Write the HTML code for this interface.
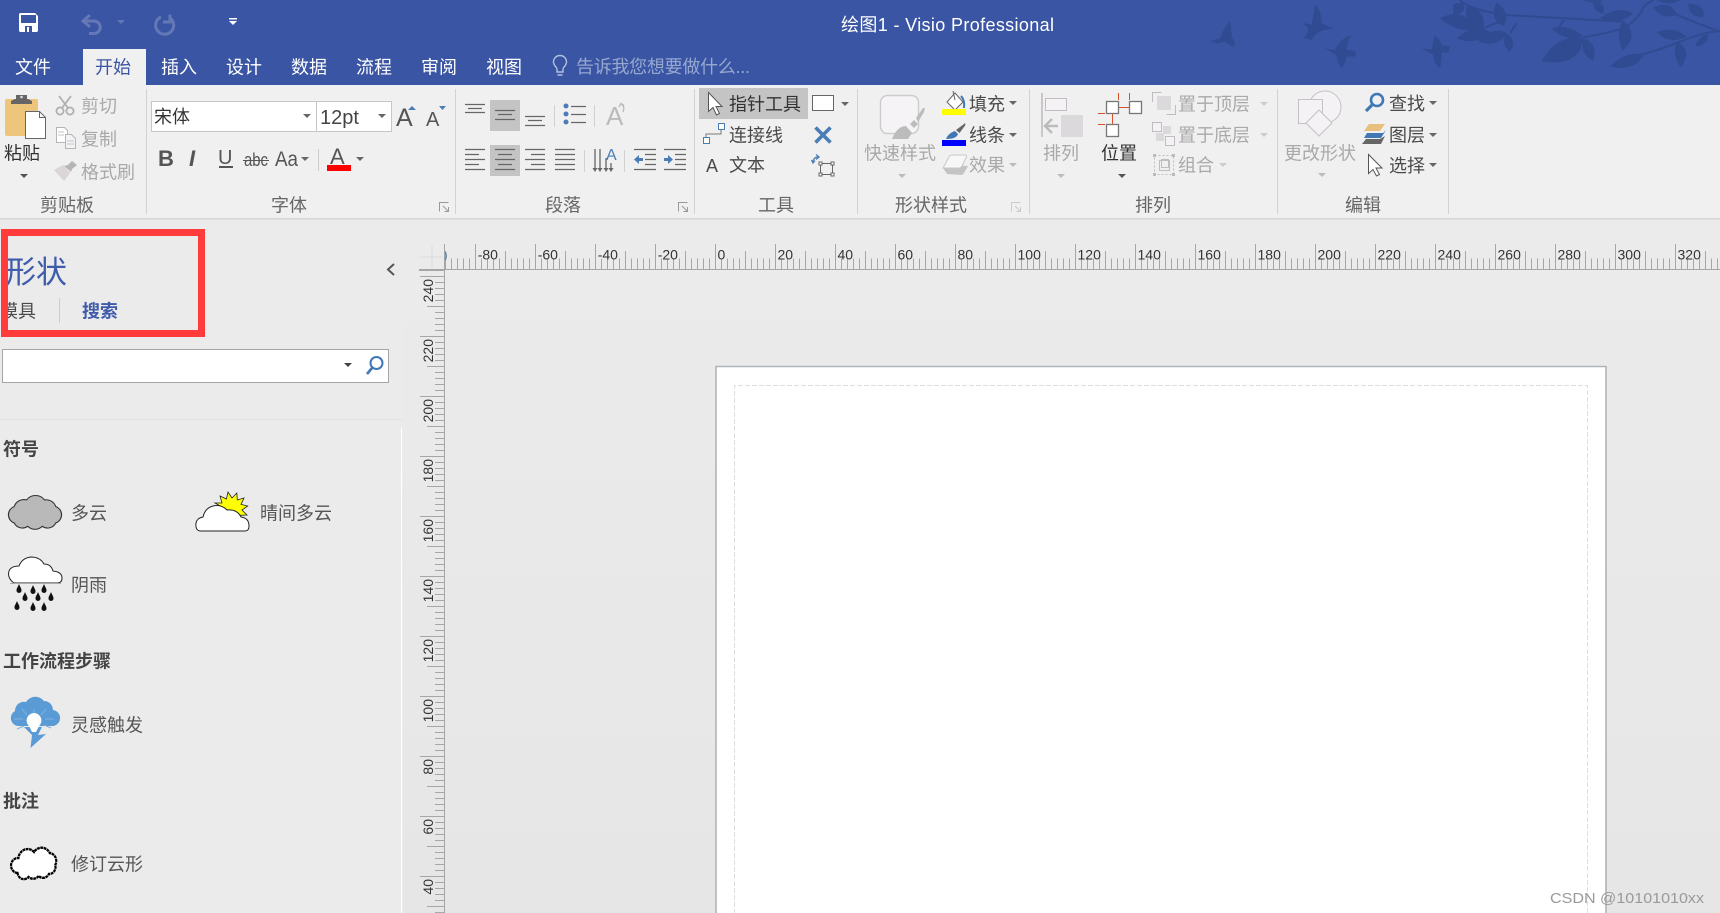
<!DOCTYPE html>
<html lang="zh-CN">
<head>
<meta charset="utf-8">
<title>绘图1 - Visio Professional</title>
<style>
html,body{margin:0;padding:0;width:1720px;height:913px;overflow:hidden;background:#ebebeb}
svg{display:block;position:absolute;left:0;top:0}
text{font-family:"Liberation Sans","Noto Sans CJK SC",sans-serif;font-size:18px;white-space:pre}
.t{fill:#fff}
.d{fill:#4a4a4a}
.g{fill:#a9a9a9}
.l{fill:#666}
.p{fill:#555}
.b{font-weight:700;fill:#444}
.r{font-size:14px;fill:#333}
</style>
</head>
<body>
<svg width="1720" height="913" viewBox="0 0 1720 913" xmlns="http://www.w3.org/2000/svg">
<defs>
<path id="a" d="M-4-2h8l-4 4z"/>
<path id="dr" d="M0-5C1-2 2.5-1 2.5 1.5a2.5 2.5 0 0 1-5 0C-2.5-1-1-2 0-5z" fill="#111"/>
<linearGradient id="bgg" x1="0" y1="0" x2="0" y2="1"><stop offset=".3" stop-color="#ebebeb"/><stop offset="1" stop-color="#e6e6e6"/></linearGradient>
</defs>

<!-- backgrounds -->
<rect width="1720" height="913" fill="url(#bgg)"/>
<rect x="0" y="219" width="403" height="694" fill="#ebebeb"/>
<rect width="1720" height="85" fill="#3a55a3"/>
<rect y="85" width="1720" height="133" fill="#f0f0f0"/>
<rect y="218" width="1720" height="1.5" fill="#d6d6d6"/>

<!-- title bar decorations -->
<g transform="translate(1240 0) scale(.3333)" fill="#304b91">
<path d="M-90 123L-60 115Q-50 85-30 63Q-25 90-25 110L-15 130L-20 141L-45 125L-70 130z"/>
<path d="M187 68L215 75L225 15Q245 30 245 70L280 85L245 92Q225 100 215 120L192 115Q205 95 205 85z"/>
<path d="M255 145L285 150Q300 115 335 105Q320 130 318 148L348 155L345 170L320 170Q315 195 305 205Q290 185 290 165z"/>
<path d="M545 145L575 148L583 108Q600 115 605 135L630 140L625 158L605 158Q605 185 600 205Q580 190 580 165z"/>
<path d="M600 55Q660 20 725 85Q660 105 600 55zM680 18Q740 30 730 85Q670 75 680 18zM770 8Q815 40 790 78Q745 55 770 8zM640 12Q680 0 672 30Q650 50 640 50zM650 115Q700 70 750 95Q710 140 650 115zM715 125Q760 75 800 100Q775 145 715 125zM800 100Q835 125 808 155Q780 130 800 100zM905 185Q950 100 1030 115Q1020 200 905 185zM1030 115Q1075 130 1060 182Q1020 165 1030 115zM935 85Q985 70 1030 110Q975 125 935 85zM1080 55Q1130 15 1180 40Q1140 75 1080 55zM1150 62Q1200 105 1148 152Q1125 100 1150 62zM1110 200Q1160 150 1210 165Q1185 215 1110 200zM1310 125Q1360 150 1322 202Q1295 165 1310 125zM1250 97Q1300 75 1340 110Q1290 135 1250 97zM1060 8Q1100 5 1090 42Q1060 35 1060 8zM1240 22Q1295 0 1310 45Q1265 60 1240 22zM1345 10Q1400 15 1390 52Q1345 50 1345 10zM1365 138Q1385 100 1405 105Q1400 140 1365 138zM1030 0Q1060 15 1090 5L1080 0zM1250 0Q1290 20 1320 0z"/>
<path d="M660 0Q690 30 800 45L1150 65M800 60Q760 70 725 88M1030 112Q1100 100 1150 85Q1195 60 1215 15L1240 0M1200 165Q1260 150 1320 125Q1380 100 1440 92M1300 40Q1370 70 1440 95M970 60L955 90M830 70L810 100" fill="none" stroke="#304b91" stroke-width="6"/>
</g>

<!-- QAT -->
<path d="M20 13h15l3 3v15l-1 1H20l-1-1V14z" fill="#fff"/>
<rect x="21" y="15" width="15" height="8" fill="#3a55a3"/>
<rect x="25" y="26" width="7" height="6" fill="#3a55a3"/>
<rect x="27" y="27" width="2" height="5" fill="#fff"/>
<g fill="none" stroke="#6478b5" stroke-width="3">
<path d="M90 15l-7 6 7 6M84 21h10a6.2 6.2 0 0 1 0 12.500h-5"/>
<path d="M161 17a9 9 0 1 0 9 1M170 14.500v7.500h-7"/>
</g>
<use href="#a" x="121" y="22" fill="#6478b5"/>
<rect x="229" y="18" width="8" height="1.500" fill="#fff"/>
<path d="M229 21h8l-4 4z" fill="#fff"/>
<text class="t" x="841" y="31" textLength="213" lengthAdjust="spacing">绘图1 - Visio Professional</text>

<!-- tabs -->
<rect x="83" y="49" width="63" height="36" fill="#f0f0f0"/>
<g class="t">
<text class="t" x="15" y="73.500">文件</text>
<text x="95" y="73.500" fill="#3a55a3">开始</text>
<text class="t" x="161" y="73.500">插入</text>
<text class="t" x="226" y="73.500">设计</text>
<text class="t" x="291" y="73.500">数据</text>
<text class="t" x="356" y="73.500">流程</text>
<text class="t" x="421" y="73.500">审阅</text>
<text class="t" x="486" y="73.500">视图</text>
</g>
<path d="M557 72v-3c0-2-3.500-3-3.500-7a6.500 6.500 0 0 1 13 0c0 4-3.500 5-3.500 7v3zM557.500 75h5" fill="none" stroke="#b4c0de" stroke-width="1.400"/>
<text x="576" y="73" fill="#97a8d0" textLength="174" lengthAdjust="spacing">告诉我您想要做什么...</text>

<!-- ribbon separators -->
<g fill="#d2d2d2">
<rect x="146" y="89" width="1" height="125"/><rect x="455" y="89" width="1" height="125"/><rect x="694" y="89" width="1" height="125"/><rect x="857" y="89" width="1" height="125"/><rect x="1029" y="89" width="1" height="125"/><rect x="1277" y="89" width="1" height="125"/><rect x="1448" y="89" width="1" height="125"/>
</g>

<!-- group labels -->
<g>
<text class="l" x="40" y="211.500">剪贴板</text>
<text class="l" x="271" y="211.500">字体</text>
<text class="l" x="545" y="211.500">段落</text>
<text class="l" x="758" y="211.500">工具</text>
<text class="l" x="895" y="211.500">形状样式</text>
<text class="l" x="1135" y="211.500">排列</text>
<text class="l" x="1345" y="211.500">编辑</text>
</g>
<g fill="none" stroke="#999" stroke-width="1">
<path d="M439.500 211.500v-9h9M443 206l5 5M448.500 207v4.500h-4"/>
<path d="M678.500 211.500v-9h9M682 206l5 5M687.500 207v4.500h-4"/>
</g>
<path d="M1011.500 211.500v-9h9M1015 206l5 5M1020.500 207v4.500h-4" fill="none" stroke="#ccc"/>

<!-- clipboard -->
<rect x="5" y="99" width="33" height="37" rx="2" fill="#edc67c"/>
<path d="M11 104v-3l4-2h1v-4h11v4h1l4 2v3z" fill="#666"/>
<circle cx="21.500" cy="97" r="1.300" fill="#ddd"/>
<path d="M25.500 111.500h14l6 6v21h-20z" fill="#fff" stroke="#666"/>
<path d="M39.500 111.500v6h6" fill="none" stroke="#666"/>
<text x="4" y="159.500" fill="#333">粘贴</text>
<use href="#a" x="24" y="176" fill="#555"/>
<g fill="none" stroke="#b0b0b0" stroke-width="1.800">
<circle cx="60" cy="111" r="3.600"/><circle cx="70" cy="111" r="3.600"/>
<path d="M62 108L71 96M68 108L59 96"/>
</g>
<g fill="#fff" stroke="#b5b5b5">
<path d="M56.500 127.500h8l3 3v12h-11z"/>
<path d="M65.500 134.500h6l4 4v10h-10z" fill="#f5f2f6"/>
<path d="M58 132h6M58 135h6M67 141h7M67 144h7" stroke="#c4c4c4"/>
</g>
<path d="M54 170l9-5 7 8-6 8z" fill="#d9d5d8"/><path d="M64 166l4-1 4-4 5 4-5 4-1 3z" fill="#b5b5b5"/>
<text class="g" x="81" y="112.500">剪切</text>
<text class="g" x="81" y="145.500">复制</text>
<text class="g" x="81" y="178.500">格式刷</text>

<!-- font -->
<rect x="151.500" y="101.500" width="165" height="30" fill="#fff" stroke="#c6c6c6"/>
<rect x="316.500" y="101.500" width="75" height="30" fill="#fff" stroke="#c6c6c6"/>
<text x="154" y="123" fill="#333">宋体</text>
<text x="320" y="124" style="font-size:20px" fill="#444">12pt</text>
<use href="#a" x="307" y="116" fill="#666"/>
<use href="#a" x="382" y="116" fill="#666"/>
<text x="396" y="126" style="font-size:25px" class="p">A</text>
<path d="M408 110l4-4 4 4z" fill="#4a7db5"/>
<text x="426" y="126" style="font-size:20px" class="p">A</text>
<path d="M439 106h7l-3.500 4z" fill="#4a7db5"/>
<text x="158" y="166" class="p" style="font-size:22px;font-weight:700">B</text>
<text x="189" y="166" class="p" style="font-size:22px;font-style:italic;font-weight:700">I</text>
<text x="218" y="164" class="p" style="font-size:20px">U</text>
<rect x="219" y="166" width="14" height="2" fill="#555"/>
<text x="244" y="166" class="p" textLength="24" lengthAdjust="spacingAndGlyphs">abc</text>
<rect x="243" y="160" width="26" height="1" fill="#555"/>
<text x="275" y="166" class="p" style="font-size:21px" textLength="23" lengthAdjust="spacingAndGlyphs">Aa</text>
<use href="#a" x="305" y="159" fill="#666"/>
<rect x="318" y="149" width="1" height="22" fill="#ccc"/>
<text x="330" y="164" class="p" style="font-size:22px">A</text>
<rect x="327" y="165" width="24" height="6" fill="#f00"/>
<use href="#a" x="360" y="159" fill="#666"/>

<!-- paragraph -->
<rect x="490" y="100" width="30" height="31" fill="#c4c4c4"/>
<rect x="490" y="145" width="30" height="31" fill="#c4c4c4"/>
<g fill="none" stroke="#666" stroke-width="1.300">
<path d="M465 104.500h20M468 108.500h14M465 112.500h20"/>
<path d="M495 110.500h20M498 114.500h14M495 119.500h20"/>
<path d="M525 116.500h20M528 120.500h14M525 125.500h20"/>
<path d="M465 149.500h20M465 154.500h14M465 159.500h20M465 164.500h14M465 169.500h20"/>
<path d="M495 149.500h20M498 154.500h14M495 159.500h20M498 164.500h14M495 169.500h20"/>
<path d="M525 149.500h20M531 154.500h14M525 159.500h20M531 164.500h14M525 169.500h20"/>
<path d="M555 149.500h20M555 154.500h20M555 159.500h20M555 164.500h20M555 169.500h20"/>
<path d="M571 106.500h15M571 114.500h15M571 122.500h15"/>
<path d="M595 149v21M600 149v21M606 158v12M611 163v7"/>
<path d="M634 149.500h22M645 154.500h11M645 159.500h11M645 164.500h11M634 169.500h22"/>
<path d="M664 149.500h22M675 154.500h11M675 159.500h11M675 164.500h11M664 169.500h22"/>
</g>
<g fill="#666"><path d="M592.500 168h5l-2.500 4zM597.500 168h5l-2.500 4zM603.500 168h5l-2.500 4zM608.500 168h5l-2.500 4z"/></g>
<g fill="#4a7db5">
<circle cx="566" cy="106" r="2.500"/><circle cx="566" cy="114" r="2.500"/><circle cx="566" cy="122" r="2.500"/>
<path d="M634 159.500l5-4.500v3h4v3h-4v3zM673 159.500l-5-4.500v3h-4v3h4v3z"/>
</g>
<text x="606" y="160" style="font-size:16px" fill="#4a7db5">A</text>
<g fill="#d0d0d0"><rect x="554" y="105" width="1" height="22"/><rect x="594" y="105" width="1" height="22"/><rect x="584" y="150" width="1" height="22"/><rect x="624" y="150" width="1" height="22"/></g>
<text x="606" y="125" style="font-size:26px" fill="#bbb">A</text>
<path d="M621 104c3 1 3.500 5 2 8M619 107l2-3.500 3 2" fill="none" stroke="#bbb" stroke-width="1.400"/>

<!-- tools -->
<rect x="699" y="88" width="109" height="31" fill="#c4c4c4"/>
<path d="M708.500 92.500v19l4.500-4 3.500 7.500 3-1.500-3.500-7h6z" fill="#fff" stroke="#555"/>
<text x="729" y="110.500" fill="#333">指针工具</text>
<rect x="812.500" y="95.500" width="21" height="15" fill="#fff" stroke="#666"/>
<use href="#a" x="845" y="104" fill="#666"/>
<path d="M721 129v5h-15v3" fill="none" stroke="#777"/>
<rect x="718.500" y="123.500" width="6" height="6" fill="#fff" stroke="#4a7db5"/>
<rect x="703.500" y="137.500" width="6" height="6" fill="#fff" stroke="#4a7db5"/>
<text class="d" x="729" y="141.500">连接线</text>
<path d="M815.500 127.500l15 15M830.500 127.500l-15 15" fill="none" stroke="#4a7db5" stroke-width="3.600"/>
<text class="d" x="706" y="172" style="font-size:18px">A</text>
<text class="d" x="729" y="171.500">文本</text>
<rect x="820.500" y="163.500" width="12" height="11" fill="none" stroke="#666"/>
<g fill="#fff" stroke="#666"><rect x="819" y="162" width="3" height="3"/><rect x="831" y="162" width="3" height="3"/><rect x="819" y="173" width="3" height="3"/><rect x="831" y="173" width="3" height="3"/></g>
<path d="M813 162a5 5 0 0 1 5-5M816 154.500l3 2.500-3 2.500M811.500 160l1.500 3 2-2.500" fill="none" stroke="#4a7db5" stroke-width="1.300"/>

<!-- shape styles -->
<rect x="880.500" y="95.500" width="38" height="38" rx="7" fill="#f5f3f6" stroke="#ccc" stroke-width="1.400"/>
<path d="M892 139c3-8 8-13 14-13l6 7-4 6z" fill="#bcbcbc"/>
<path d="M910 124l4-4 4 4-4 4zM916 118l7-10 2 0-1 4-6 10z" fill="#bcbcbc"/>
<text class="g" x="864" y="159.500">快速样式</text>
<use href="#a" x="902" y="176" fill="#bbb"/>
<path d="M955 93l8 9-8 8-8-8z" fill="#fff" stroke="#666"/>
<path d="M953 91l2 9" fill="none" stroke="#666"/>
<path d="M961 96q4 4 3 12" fill="none" stroke="#3f78b4" stroke-width="2"/>
<rect x="942" y="109" width="24" height="6" fill="#ff0"/>
<text class="d" x="969" y="110.500">填充</text>
<use href="#a" x="1013" y="103" fill="#666"/>
<path d="M946 139c2-5 6-7 9-8l3 3c-1 3-4 5-12 5z" fill="#3f78b4"/>
<path d="M956 130l8-6 1-1 .5 2-6 8z" fill="#666"/>
<rect x="942" y="140" width="24" height="6" fill="#00f"/>
<text class="d" x="969" y="141.500">线条</text>
<use href="#a" x="1013" y="135" fill="#666"/>
<path d="M943 168l4 6 14 1q2 0 3-2l4-7-20-1z" fill="#c4c4c4"/>
<path d="M943 168l6-11q1-2 3-2h13q2 0 1.500 2l-4.500 9q-1 2-3 2z" fill="#f7f7f7" stroke="#c8c8c8"/>
<text class="g" x="969" y="171.500">效果</text>
<use href="#a" x="1013" y="165" fill="#bbb"/>

<!-- arrange -->
<rect x="1041" y="93" width="2" height="44" fill="#c8c8c8"/>
<rect x="1045.500" y="98.500" width="21" height="12" fill="#f5f2f6" stroke="#c0bcc0"/>
<rect x="1061" y="115" width="22" height="22" fill="#dcd9dc"/>
<path d="M1052 119l-7 7 7 7M1046 126h12" fill="none" stroke="#bbb" stroke-width="2.500"/>
<text class="g" x="1043" y="159.500">排列</text>
<use href="#a" x="1061" y="176" fill="#bbb"/>
<path d="M1118.500 93v7M1129.500 93v7M1119 107.500h10M1112.500 114v10M1098 113.500h7M1098 124.500h7" fill="none" stroke="#d9512c"/>
<g fill="#fff" stroke="#777" stroke-width="1.300">
<rect x="1106.500" y="101.500" width="12" height="12"/><rect x="1129.500" y="101.500" width="12" height="12"/><rect x="1106.500" y="124.500" width="12" height="12"/>
</g>
<text x="1101" y="159.500" fill="#333">位置</text>
<use href="#a" x="1122" y="176" fill="#555"/>
<g fill="#f5f2f6" stroke="#c0bcc0">
<path d="M1152.500 102v-9.500h9" fill="none"/>
<rect x="1157" y="96" width="14" height="14" fill="#dcd9dc" stroke="none"/>
<path d="M1175.500 105v9.500h-9" fill="none"/>
<rect x="1152.500" y="122.500" width="9" height="9"/>
<rect x="1163" y="126" width="8" height="8" fill="#dcd9dc" stroke="none"/>
<rect x="1156" y="133" width="8" height="8" fill="#dcd9dc" stroke="none"/>
<rect x="1165.500" y="136.500" width="9" height="9"/>
<rect x="1159.500" y="160.500" width="10" height="10" fill="none"/>
<rect x="1154.500" y="155.500" width="19" height="19" fill="none" stroke-dasharray="2 2"/>
<rect x="1161.500" y="159.500" width="7" height="8" fill="none"/>
</g>
<g fill="#bbb"><rect x="1153" y="154" width="3" height="3"/><rect x="1172" y="154" width="3" height="3"/><rect x="1153" y="173" width="3" height="3"/><rect x="1172" y="173" width="3" height="3"/></g>
<text class="g" x="1178" y="110.500">置于顶层</text>
<text class="g" x="1178" y="141.500">置于底层</text>
<text class="g" x="1178" y="171.500">组合</text>
<use href="#a" x="1264" y="104" fill="#ccc"/>
<use href="#a" x="1264" y="135" fill="#ccc"/>
<use href="#a" x="1223" y="165" fill="#ccc"/>

<!-- edit -->
<circle cx="1325" cy="107" r="16" fill="#f5f2f6" stroke="#c4c0c4"/>
<rect x="1298.500" y="99.500" width="24" height="24" fill="#f5f2f6" stroke="#c4c0c4"/>
<path d="M1319 110l13 13-13 13-13-13z" fill="#f5f2f6" stroke="#c4c0c4"/>
<text class="g" x="1284" y="159.500">更改形状</text>
<use href="#a" x="1322" y="175" fill="#bbb"/>
<circle cx="1377" cy="100" r="6" fill="none" stroke="#3f78b4" stroke-width="2.600"/>
<path d="M1372 105l-6 6" stroke="#3f78b4" stroke-width="3.200"/>
<text class="d" x="1389" y="110">查找</text>
<use href="#a" x="1433" y="103" fill="#666"/>
<path d="M1369 124h16l-5 7h-16z" fill="#e8bf7c"/>
<path d="M1367 133h16l3-3-5 8h-17z" fill="#3f78b4"/>
<path d="M1366 139h14l5-3-4 8h-19z" fill="#666"/>
<text class="d" x="1389" y="141.500">图层</text>
<use href="#a" x="1433" y="135" fill="#666"/>
<path d="M1368.500 154.500v19l4.500-4 3.500 6.500 3-1.500-3.500-6.500h6z" fill="#fff" stroke="#555"/>
<text class="d" x="1389" y="172">选择</text>
<use href="#a" x="1433" y="165" fill="#666"/>

<!-- panel -->
<text x="5" y="283" style="font-size:31px" fill="#3f5bab">形状</text>
<text class="d" x="0" y="317.500">模具</text>
<rect x="59" y="298" width="1" height="25" fill="#ccc"/>
<text x="82" y="317.500" style="font-weight:700" fill="#3f5bab">搜索</text>
<rect x="0" y="229" width="1" height="108" fill="#ebebeb"/>
<rect x="4.500" y="232.500" width="197" height="101" fill="none" stroke="#ff3b3b" stroke-width="7"/>
<path d="M394 264l-6 5.500 6 5.500" fill="none" stroke="#555" stroke-width="2"/>
<rect x="2.500" y="349.500" width="386" height="33" fill="#fff" stroke="#a6a6a6"/>
<use href="#a" x="348" y="365" fill="#444"/>
<circle cx="376.500" cy="363" r="6" fill="none" stroke="#3f78b4" stroke-width="2"/>
<path d="M372 368l-5 6" stroke="#3f78b4" stroke-width="2.600"/>
<rect x="0" y="419" width="403" height="1" fill="#e0e0e0"/>
<rect x="401" y="428" width="1" height="485" fill="#fff"/>

<text class="b" x="3" y="455.500">符号</text>
<text class="b" x="3" y="667.500">工作流程步骤</text>
<text class="b" x="3" y="807.500">批注</text>
<text class="p" x="71" y="519.500">多云</text>
<text class="p" x="260" y="519.500">晴间多云</text>
<text class="p" x="71" y="591.500">阴雨</text>
<text class="p" x="71" y="731.500">灵感触发</text>
<text class="p" x="71" y="870.500">修订云形</text>

<!-- stencil icons -->
<path transform="translate(35 512) scale(1.120 1.100) translate(-35.500 -512)" d="M17 522a8 8 0 0 1 0-15a9 9 0 0 1 11-6a10 10 0 0 1 16 0a9 9 0 0 1 10 6a8 8 0 0 1 0 15a8 8 0 0 1-12 3a9 9 0 0 1-13 0a8 8 0 0 1-12-3z" fill="#b9b9b9" stroke="#333"/>
<circle cx="231" cy="510" r="10" fill="#ff0"/>
<path d="M215 503l7 0-2-7 6.400 3 1.600-7 4 6 4.800-5 .5 7 6.700-2-3 6.400 6.700 1.600-5.700 4 5 5-7 .3 2 6.700-11-10z" fill="#ff0" stroke="#222" stroke-width=".8"/>
<path d="M201 531H245q4 0 4-5q0-8-8-9q-4-8-14-7q-6-6-14-4q-8 2-10 11q-6 1-7 6q-1 8 5 8z" fill="#fff" stroke="#222"/>
<path d="M14 583H57q5 0 5-5q0-6-9-7q-2-7-9-7q-4-7-13-7q-9 1-12 9q-8 0-10 5q-2 7 5 12z" fill="#fff" stroke="#222"/>
<rect x="10" y="583" width="51" height="1" fill="#aaa"/>
<use href="#dr" x="19" y="589"/><use href="#dr" x="25" y="597"/><use href="#dr" x="33" y="590"/><use href="#dr" x="38" y="597"/><use href="#dr" x="44" y="589"/><use href="#dr" x="51" y="597"/><use href="#dr" x="17" y="606"/><use href="#dr" x="33" y="607"/><use href="#dr" x="44" y="607"/>
<g transform="translate(0 1)">
<path d="M18 725a8 8 0 0 1-3-15a9 9 0 0 1 11-9a11 11 0 0 1 18-1a9 9 0 0 1 9 9a8 8 0 0 1-2 16zM24 726l8 8-1.500 13L46 733l-8 1 4-8z" fill="#5b9bd5"/>
<path d="M34 708v5M22 708l5 6M46 708l-5 6M14 718h9M54 718h-9M17 728l7-3M51 727l-7-3" stroke="#7db0de" fill="none"/>
<path d="M34 712a7.500 7.500 0 0 1 5 13l-3 6h-4l-3-6a7.500 7.500 0 0 1 5-13z" fill="#fff"/>
</g>
<path transform="translate(35 0) scale(.92 1) translate(-35 0)" d="M16 873a7 7 0 0 1 1-15a10 10 0 0 1 17-6a10 10 0 0 1 17 1a8 8 0 0 1 6 12a7 7 0 0 1-7 9a7 7 0 0 1-11 2a8 8 0 0 1-11 1a7 7 0 0 1-12-4z" fill="#fff" stroke="#000" stroke-width="2.400" stroke-dasharray="3 .6"/>

<!-- rulers -->
<path d="M432 245v23M420 257h23" stroke="#dcdcdc" fill="none"/>
<rect x="419" y="269" width="1301" height="1" fill="#a6a6a6"/>
<rect x="419" y="269.500" width="26" height="1.500" fill="#a6a6a6"/>
<rect x="444" y="244" width="1" height="669" fill="#a6a6a6"/>
<g stroke="#a6a6a6" fill="none">
<line x1="445" y1="264" x2="1720" y2="264" stroke-width="11" stroke-dasharray="1 5"/>
<line x1="445" y1="260" x2="1720" y2="260" stroke-width="18" stroke-dasharray="1 29"/>
<line x1="475" y1="256.500" x2="1720" y2="256.500" stroke-width="25" stroke-dasharray="1 59"/>
<line x1="439.500" y1="270" x2="439.500" y2="913" stroke-width="9" stroke-dasharray="1 5"/>
<line x1="435.500" y1="276" x2="435.500" y2="913" stroke-width="17" stroke-dasharray="1 29"/>
<line x1="432" y1="276" x2="432" y2="913" stroke-width="24" stroke-dasharray="1 59"/>
</g>
<path d="M445.500 252q1.500 4 0 8" fill="none" stroke="#4a6fa0"/>
<g class="r">
<text class="r" x="477.700" y="259.500">-80</text>
<text class="r" x="537.700" y="259.500">-60</text>
<text class="r" x="597.700" y="259.500">-40</text>
<text class="r" x="657.700" y="259.500">-20</text>
<text class="r" x="717.500" y="259.500">0</text>
<text class="r" x="777.500" y="259.500">20</text>
<text class="r" x="837.500" y="259.500">40</text>
<text class="r" x="897.500" y="259.500">60</text>
<text class="r" x="957.500" y="259.500">80</text>
<text class="r" x="1017.500" y="259.500">100</text>
<text class="r" x="1077.500" y="259.500">120</text>
<text class="r" x="1137.500" y="259.500">140</text>
<text class="r" x="1197.500" y="259.500">160</text>
<text class="r" x="1257.500" y="259.500">180</text>
<text class="r" x="1317.500" y="259.500">200</text>
<text class="r" x="1377.500" y="259.500">220</text>
<text class="r" x="1437.500" y="259.500">240</text>
<text class="r" x="1497.500" y="259.500">260</text>
<text class="r" x="1557.500" y="259.500">280</text>
<text class="r" x="1617.500" y="259.500">300</text>
<text class="r" x="1677.500" y="259.500">320</text>
</g>
<g text-anchor="end">
<text class="r" transform="translate(433 279) rotate(-90)">240</text>
<text class="r" transform="translate(433 339) rotate(-90)">220</text>
<text class="r" transform="translate(433 399) rotate(-90)">200</text>
<text class="r" transform="translate(433 459) rotate(-90)">180</text>
<text class="r" transform="translate(433 519) rotate(-90)">160</text>
<text class="r" transform="translate(433 579) rotate(-90)">140</text>
<text class="r" transform="translate(433 639) rotate(-90)">120</text>
<text class="r" transform="translate(433 699) rotate(-90)">100</text>
<text class="r" transform="translate(433 759) rotate(-90)">80</text>
<text class="r" transform="translate(433 819) rotate(-90)">60</text>
<text class="r" transform="translate(433 879) rotate(-90)">40</text>
</g>

<!-- page -->
<path d="M716 914V366.500H1606V914" fill="#fff" stroke="#b0b4ba" stroke-width="1.600"/>
<path d="M734.500 914V385.500H1587.500V914" fill="none" stroke="#dedede" stroke-dasharray="5 2"/>

<!-- watermark -->
<text x="1550" y="903" style="font-size:15px" fill="#9a9a9a" textLength="154" lengthAdjust="spacingAndGlyphs">CSDN @10101010xx</text>
</svg>
</body>
</html>
